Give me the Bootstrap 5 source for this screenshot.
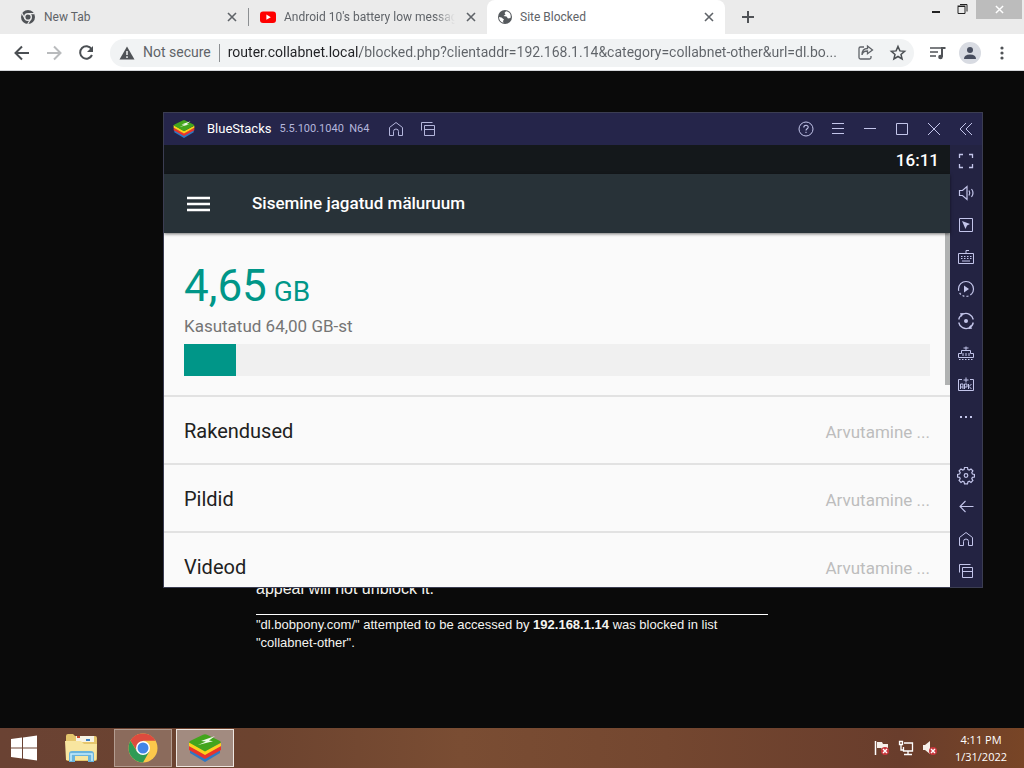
<!DOCTYPE html>
<html lang="en">
<head>
<meta charset="utf-8">
<meta name="viewport" content="width=device-width, initial-scale=1">
<title>Site Blocked</title>
<link href="https://cdn.jsdelivr.net/npm/bootstrap@5.3.0/dist/css/bootstrap.min.css" rel="stylesheet">
<style>
  body { font-family: "Open Sans", sans-serif; background: #0a0a0a; }
  button { border: 0; background: none; padding: 0; color: inherit; }
  svg { display: block; flex: none; }

  /* browser */
  .tab-strip { height: 34px; background: #ebebeb; color: #5f6368; font-family: Roboto, sans-serif; font-size: 12px; padding-right: 2px; }
  .browser-tab { flex: 0 1 238px; min-width: 0; height: 34px; padding: 0 8px 0 11px; }
  .browser-tab.first-tab { flex-basis: 248px; padding-left: 20px; }
  .browser-tab a { color: inherit; text-decoration: none; overflow: hidden; white-space: nowrap; }
  .tab-rule { width: 1px; height: 18px; background: #8c8f92; }
  .tab-current { background: #fff; border-radius: 8px 8px 0 0; }
  .fade-end { -webkit-mask-image: linear-gradient(90deg, #000 88%, transparent); mask-image: linear-gradient(90deg, #000 88%, transparent); }
  .caption-btn { width: 26px; height: 19px; color: #222; }
  .caption-close { width: 46px; background: #bcbcbc; color: #fff; }
  .tool-bar { height: 37px; background: #fff; color: #5f6368; border-bottom: 1px solid #d5d7da; padding: 1px 6px 0 6px; }
  .tool-btn { width: 32px; height: 32px; }
  .omnibox { height: 28px; border-radius: 14px; background: #f1f3f4; font-family: Roboto, sans-serif; font-size: 14px; padding-left: 9px; }
  .omnibox input { border: 0; outline: 0; background: none; padding: 0; min-width: 0; font-size: 14px;
    color: transparent; background: linear-gradient(90deg, #202124 132px, #5f6368 132px); -webkit-background-clip: text; background-clip: text; }
  .avatar { width: 22px; height: 22px; border-radius: 50%; background: #d8dbe2; color: #474d5e; }

  /* blocked page */
  .blocked-page { color: #f4f4f0; font-family: "Liberation Sans", Arial, sans-serif; min-height: 0; }
  .blocked-copy { width: 50%; margin: 0 auto; padding-top: 506px; font-size: 13px; line-height: 18px; }
  .blocked-copy .appeal { font-size: 16px; line-height: 24px; margin: 0; }
  .blocked-copy hr { margin: 13px 0 1px; border-top: 1px solid #fff; opacity: 1; }

  /* emulator window lying over the browser */
  .emulator { position: absolute; inset: 41px 41px 140px 163px; border: 1px solid #3b3d52; background: #232342; color: #c3c5ea; font-family: Roboto, sans-serif; }
  .emu-title { height: 32px; background: #25254a; padding-left: 9px; }
  .emu-name { font-size: 13px; color: #fff; }
  .emu-version { font-size: 11px; color: #b4b6dc; }
  .emu-quick { margin-left: 11px; }
  .emu-btn { width: 32px; height: 32px; flex: none; }
  .emu-screen { background: #fafafa; min-width: 0; }
  .status-row { height: 29px; background: #14181b; color: #fff; font-size: 17px; font-weight: 500; padding: 2px 11px 0 0; }
  .app-row { height: 59px; background: #283238; color: #fff; padding-left: 23px; box-shadow: 0 1px 3px #0008; z-index: 1; }
  .app-row h1 { font-size: 17px; margin: 0 0 0 42px; font-weight: 500; }
  .storage { position: relative; min-height: 0; overflow: hidden; }
  .storage-head { height: 162px; padding: 29px 20px 0; flex: none; }
  .used { color: #009688; font-size: 44px; line-height: 48px; }
  .used-unit { font-size: 28px; white-space: pre; }
  .used-note { color: #757575; font-size: 17px; line-height: 20px; }
  .storage .progress { height: 32px; border-radius: 0; background: #f0f0f0; margin-top: 8px; }
  .storage .progress-bar { background: #009688; }
  .storage-row { height: 68px; border-top: 2px solid #e2e2e2; padding: 19px 20px 0; font-size: 20px; color: #212121; flex: none; }
  .storage-row a { color: inherit; text-decoration: none; }
  .pending { font-size: 17px; color: #bdbdbd; }
  .scroll-thumb { position: absolute; right: 0; top: 0; width: 5px; height: 152px; background: #b0b2b2; }

  /* taskbar */
  .task-bar { height: 40px; background: linear-gradient(90deg, #6a4233, #6c432f 25%, #7a4d33 45%, #744730 65%, #693d2c 88%, #784526); color: #fff; }
  .task-btn { width: 58px; height: 38px; }
  .task-start { width: 48px; }
  .task-open { background: #8b6b5c; border: 1px solid #b39c90; }
  .task-front { background: #a28b80; border: 1px solid #eee6e0; }
  .clock { width: 78px; padding-right: 8px; font-size: 11px; line-height: 17px; }
</style>
</head>
<body class="vh-100 d-flex flex-column overflow-hidden">

<svg width="0" height="0" class="position-absolute" aria-hidden="true">
  <symbol id="close" viewBox="0 0 10 10"><path d="M1 1l8 8M9 1L1 9" stroke="currentColor" stroke-width="1.6" fill="none"/></symbol>
  <symbol id="home" viewBox="0 0 16 16"><path d="M1.500 6.500L8 1.500l6.500 5v8h-4v-4a2.500 2.500 0 0 0-5 0v4h-4z" fill="none" stroke="currentColor"/></symbol>
  <symbol id="windows" viewBox="0 0 16 16"><path d="M1.500 9.500v-8h11M4.500 4.500h10v10h-10zM4.500 8.500h10" fill="none" stroke="currentColor"/></symbol>
  <symbol id="stack" viewBox="0 0 34 30">
    <path d="M2 20l15 9 15-9v-4L17 24 2 16z" fill="#2d78c4"/><path d="M1 17l16 9 16-9v-4L17 21 1 13z" fill="#e8342c"/>
    <path d="M1 13l16 9 16-9v-3L17 18 1 9z" fill="#fcd21c"/><path d="M1 9.500Q1 8.500 3 7.500L15 1.700q2-1 4 0l12 5.800q2 1 2 2L17 18.500z" fill="#43a51d"/>
    <path d="M10 12l8-3.500-5-.5 14-5-6 4.500 4 .7z" fill="#effbe9"/>
  </symbol>
</svg>

<header>
  <div class="tab-strip d-flex align-items-center">
    <div class="browser-tab first-tab d-flex align-items-center gap-2">
      <svg width="16" height="16" viewBox="0 0 16 16"><circle cx="8" cy="8" r="7" fill="#505357"/><circle cx="8" cy="8" r="3.300" fill="none" stroke="#ebebeb" stroke-width="1.400"/><path d="M8 4.700h6.400M5.100 9.700L1.900 4.200M10.900 9.700L7.700 15" stroke="#ebebeb" stroke-width="1.200"/></svg>
      <a href="#" class="flex-grow-1">New Tab</a>
      <button aria-label="Close New Tab"><svg width="16" height="10"><use href="#close" width="10" height="10" x="3"/></svg></button>
    </div>
    <span class="tab-rule"></span>
    <div class="browser-tab d-flex align-items-center gap-2">
      <svg width="16" height="16" viewBox="0 0 16 16"><rect y="2.500" width="16" height="11.500" rx="3" fill="#f00"/><path d="M6.400 5.600l4.400 2.600-4.400 2.600z" fill="#fff"/></svg>
      <a href="#" class="flex-grow-1 fade-end">Android 10's battery low messag</a>
      <button aria-label="Close Android 10's battery low message"><svg width="16" height="10"><use href="#close" width="10" height="10" x="3"/></svg></button>
    </div>
    <div class="browser-tab tab-current d-flex align-items-center gap-2">
      <svg width="14" height="14" viewBox="0 0 14 14"><circle cx="7" cy="7" r="7" fill="#55595d"/><path d="M1 7l2.500.5L6 9.500 5 11l.5 1.800C2.500 12 1 10 1 7zM8 1.200L6.500 3l1 1.500L5.500 6l3 .5L10 8.500l2.500-.5C13.500 4 11 1.500 8 1.200z" fill="#fff"/></svg>
      <a href="#" class="flex-grow-1">Site Blocked</a>
      <button aria-label="Close Site Blocked"><svg width="16" height="10"><use href="#close" width="10" height="10" x="3"/></svg></button>
    </div>
    <button class="ms-3" aria-label="New tab"><svg width="14" height="14"><path d="M7 1v12M1 7h12" stroke="#505357" stroke-width="2"/></svg></button>
    <div class="ms-auto d-flex align-self-start">
      <button class="caption-btn" aria-label="Minimize"><svg width="26" height="19"><path d="M8 12h8" stroke="currentColor" stroke-width="2"/></svg></button>
      <button class="caption-btn" aria-label="Restore"><svg width="26" height="19"><path d="M8 6.500h7v7H8zM7.500 6h8" fill="none" stroke="currentColor"/><path d="M10 4.500h7v7" fill="none" stroke="currentColor"/></svg></button>
      <button class="caption-btn caption-close d-flex align-items-center justify-content-center" aria-label="Close"><svg width="9" height="9"><use href="#close"/></svg></button>
    </div>
  </div>
  <div class="tool-bar d-flex align-items-center">
    <button class="tool-btn" aria-label="Back"><svg width="32" height="32"><path d="M23 16H10M16 9.500L9.500 16l6.500 6.500" fill="none" stroke="#4b4f53" stroke-width="2"/></svg></button>
    <button class="tool-btn" aria-label="Forward"><svg width="32" height="32"><path d="M9 16h13M16 9.500l6.500 6.500-6.500 6.500" fill="none" stroke="#b9bbbd" stroke-width="2"/></svg></button>
    <button class="tool-btn" aria-label="Reload"><svg width="32" height="32"><path d="M21.500 12A6.200 6.200 0 1 0 22 18" fill="none" stroke="#4b4f53" stroke-width="2"/><path d="M23 9v6h-6z" fill="#4b4f53"/></svg></button>
    <div class="omnibox d-flex align-items-center flex-grow-1 ms-2 me-2">
      <svg width="16" height="14" viewBox="0 0 16 14"><path d="M8 0.500L15.500 13.500H.5z" fill="#505357"/><path d="M8 5v4M8 10.300v1.700" stroke="#f1f3f4" stroke-width="1.500"/></svg>
      <label for="address" class="ms-2 text-nowrap">Not secure</label>
      <span class="tab-rule mx-2"></span>
      <input id="address" class="flex-grow-1" type="text" value="router.collabnet.local/blocked.php?clientaddr=192.168.1.14&amp;category=collabnet-other&amp;url=dl.bo...">
      <button class="tool-btn" aria-label="Share"><svg width="32" height="32"><path d="M14 10h-3.500a1.500 1.500 0 0 0-1.500 1.500v9a1.500 1.500 0 0 0 1.500 1.500h9a1.500 1.500 0 0 0 1.500-1.500V19M12 18c.5-3 2.500-4 5.500-4v2.800L22.500 13l-5-4v2.500C13.500 11.500 12 14 12 18z" fill="none" stroke="#5f6368" stroke-width="1.300"/></svg></button>
      <button class="tool-btn" aria-label="Bookmark"><svg width="32" height="32"><path d="M16 9.500l1.900 4.400 4.700.4-3.600 3.100 1.100 4.600-4.100-2.500-4.100 2.500 1.100-4.600-3.600-3.100 4.700-.4z" fill="none" stroke="#4b4f53" stroke-width="1.500"/></svg></button>
    </div>
    <button class="tool-btn" aria-label="Media controls"><svg width="32" height="32"><path d="M8 11h11M8 15h8M8 19h6" stroke="#505357" stroke-width="1.700"/><path d="M20 20v-9h3.500" stroke="#505357" stroke-width="2" fill="none"/><circle cx="18.500" cy="20" r="2.300" fill="#505357"/></svg></button>
    <button class="tool-btn d-flex align-items-center justify-content-center" aria-label="Profile"><span class="avatar"><svg width="22" height="22"><circle cx="11" cy="8" r="3" fill="currentColor"/><path d="M5 17c0-3 2-4.500 6-4.500s6 1.500 6 4.500z" fill="currentColor"/></svg></span></button>
    <button class="tool-btn" aria-label="Menu"><svg width="32" height="32" fill="#505357"><circle cx="16" cy="11" r="1.600"/><circle cx="16" cy="16" r="1.600"/><circle cx="16" cy="21" r="1.600"/></svg></button>
  </div>
</header>

<main class="blocked-page flex-grow-1 position-relative overflow-hidden">
  <div class="blocked-copy">
    <p class="appeal">appeal will not unblock it.</p>
    <hr>
    <p class="mb-0">"dl.bobpony.com/" attempted to be accessed by <b>192.168.1.14</b> was blocked in list "collabnet-other".</p>
  </div>

  <section class="emulator d-flex flex-column" aria-label="BlueStacks">
    <div class="emu-title d-flex align-items-center">
      <svg width="22" height="20"><use href="#stack"/></svg>
      <span class="emu-name ms-2 ps-1">BlueStacks</span>
      <span class="emu-version ms-2 me-auto d-flex align-items-center">5.5.100.1040&nbsp; N64
        <button class="emu-btn emu-quick d-flex align-items-center justify-content-center" aria-label="Home"><svg width="16" height="16"><use href="#home"/></svg></button>
        <button class="emu-btn d-flex align-items-center justify-content-center" aria-label="Recent apps"><svg width="16" height="16"><use href="#windows"/></svg></button>
      </span>
      <button class="emu-btn" aria-label="Help"><svg width="32" height="32"><circle cx="16" cy="16" r="7" fill="none" stroke="currentColor"/><path d="M13.800 14.500c0-3 4.600-2.800 4.400-.2-.1 1.500-2.200 1.500-2.200 3.200M16 18.800v1.200" fill="none" stroke="currentColor" stroke-width="1.100"/></svg></button>
      <button class="emu-btn" aria-label="Menu"><svg width="32" height="32"><path d="M10 10.500h12M10 15.500h12M10 20.500h12" stroke="currentColor"/></svg></button>
      <button class="emu-btn" aria-label="Minimize"><svg width="32" height="32"><path d="M10 15.500h12" stroke="currentColor"/></svg></button>
      <button class="emu-btn" aria-label="Maximize"><svg width="32" height="32"><path d="M10.500 10.500h11v11h-11z" fill="none" stroke="currentColor"/></svg></button>
      <button class="emu-btn" aria-label="Close"><svg width="32" height="32"><path d="M10 10l12 12M22 10L10 22" stroke="currentColor"/></svg></button>
      <button class="emu-btn" aria-label="Collapse"><svg width="32" height="32"><path d="M16 10l-6 6 6 6M22 10l-6 6 6 6" fill="none" stroke="currentColor"/></svg></button>
    </div>

    <div class="d-flex flex-grow-1 overflow-hidden">
      <div class="emu-screen flex-grow-1 d-flex flex-column">
        <div class="status-row d-flex align-items-center justify-content-end flex-shrink-0">16:11</div>
        <div class="app-row d-flex align-items-center flex-shrink-0">
          <button aria-label="Open navigation"><svg width="23" height="16"><path d="M0 2h23M0 8h23M0 14h23" stroke="#fff" stroke-width="2.500"/></svg></button>
          <h1>Sisemine jagatud mäluruum</h1>
        </div>
        <div class="storage flex-grow-1 d-flex flex-column">
          <div class="storage-head">
            <div class="used">4,65<span class="used-unit"> GB</span></div>
            <div class="used-note">Kasutatud 64,00 GB-st</div>
            <div class="progress" role="progressbar" aria-label="Used storage" aria-valuenow="7" aria-valuemin="0" aria-valuemax="100"><div class="progress-bar" style="width: 7%"></div></div>
          </div>
          <div class="storage-row d-flex align-items-baseline justify-content-between"><a href="#">Rakendused</a><span class="pending">Arvutamine ...</span></div>
          <div class="storage-row d-flex align-items-baseline justify-content-between"><a href="#">Pildid</a><span class="pending">Arvutamine ...</span></div>
          <div class="storage-row d-flex align-items-baseline justify-content-between"><a href="#">Videod</a><span class="pending">Arvutamine ...</span></div>
          <span class="scroll-thumb"></span>
        </div>
      </div>

      <nav class="d-flex flex-column flex-shrink-0" aria-label="Emulator tools">
        <button class="emu-btn" aria-label="Full screen"><svg width="32" height="32"><path d="M9.500 13V9.500H13M19 9.500h3.500V13M22.500 19v3.500H19M13 22.500H9.500V19" fill="none" stroke="currentColor" stroke-width="1.300"/></svg></button>
        <button class="emu-btn" aria-label="Volume"><svg width="32" height="32"><path d="M9.500 13.500h3l4.500-4v13l-4.500-4h-3zM19 13.500q1.500 2.500 0 5M21.500 12q3 4 0 8" fill="none" stroke="currentColor" stroke-width="1.200"/></svg></button>
        <button class="emu-btn" aria-label="Lock cursor"><svg width="32" height="32"><path d="M9.500 9.500h13v13h-13z" fill="none" stroke="currentColor"/><path d="M12 12l8 3-3 1.500L15.500 20z" fill="currentColor"/></svg></button>
        <button class="emu-btn" aria-label="Game controls"><svg width="32" height="32"><path d="M8.500 12.500h15v10h-15zM16 12v-2.500h3" fill="none" stroke="currentColor"/><path d="M11 15.500h10.500M11 17.500h10.500" stroke="currentColor" stroke-dasharray="1.500 1.500"/><path d="M12 20h8" stroke="currentColor"/></svg></button>
        <button class="emu-btn" aria-label="Macro recorder"><svg width="32" height="32"><path d="M8.500 16a7.500 7.500 0 0 1 15 0q0 3-2 5" fill="none" stroke="currentColor" stroke-width="1.200"/><path d="M8.500 16a7.500 7.500 0 0 0 13 5" fill="none" stroke="currentColor" stroke-width="1.200" stroke-dasharray="2 2"/><path d="M14 12.500l5 3.500-5 3.500z" fill="currentColor"/></svg></button>
        <button class="emu-btn" aria-label="Sync"><svg width="32" height="32"><path d="M13 9.100a7.500 7.500 0 0 1 10.300 5.400M23.300 17.500a7.500 7.500 0 0 1-4.300 5.300M19 22.900a7.500 7.500 0 0 1-10.300-5.400M8.700 14.500a7.500 7.500 0 0 1 2.600-4.300" fill="none" stroke="currentColor" stroke-width="1.300"/><path d="M10 8.300l4-.3-2.500 4zM22 23.700l-4 .3 2.500-4z" fill="currentColor"/><circle cx="16" cy="16" r="2" fill="currentColor"/></svg></button>
        <button class="emu-btn" aria-label="Multi-instance"><svg width="32" height="32"><path d="M8.500 20.500v-4h3v-3h9v3h3v4zM16 13.500v-4M13.500 11h5M13 16v3M16 16v3M19 16v3" fill="none" stroke="currentColor"/><path d="M9 22.500h15" stroke="currentColor" stroke-dasharray="1.500 1.500"/></svg></button>
        <button class="emu-btn" aria-label="Install APK"><svg width="32" height="32"><path d="M12 10.500H8.500v11h15v-11H20M16 8.500v5M13.500 11h5" fill="none" stroke="currentColor"/><path d="M10.500 20v-5h2.500v5M10.500 18H13M14.500 20v-5H17v3h-2.500M18.500 15v5M21.500 15l-2.500 2.500 2.500 2.500" fill="none" stroke="currentColor"/></svg></button>
        <button class="emu-btn" aria-label="More"><svg width="32" height="32"><path d="M10 16h2M15 16h2M20 16h2" stroke="currentColor" stroke-width="2"/></svg></button>
        <button class="emu-btn mt-auto" aria-label="Settings"><svg width="32" height="32" viewBox="0 1 32 32" fill="none" stroke="currentColor" stroke-width="1.200"><path d="M14.500 9.500h3l.4 2 1.400.6 1.700-1.100 1.900 1.900-1.100 1.700.6 1.400 2 .4v2.600l-2 .4-.6 1.400 1.100 1.700-1.900 1.900-1.700-1.100-1.400.6-.4 2h-3l-.4-2-1.400-.6-1.700 1.100-1.900-1.900 1.100-1.700-.6-1.400-2-.4v-2.600l2-.4.6-1.400-1.100-1.700L11 11l1.700 1.100 1.400-.6z"/><circle cx="16" cy="17.500" r="1.800"/></svg></button>
        <button class="emu-btn" aria-label="Back"><svg width="32" height="32"><path d="M23.500 15.500H10M15.500 10L10 15.500l5.500 5.500" fill="none" stroke="currentColor" stroke-width="1.100"/></svg></button>
        <button class="emu-btn d-flex align-items-center justify-content-center" aria-label="Home screen"><svg width="16" height="16"><use href="#home"/></svg></button>
        <button class="emu-btn d-flex align-items-center justify-content-center" aria-label="Recents"><svg width="16" height="16"><use href="#windows"/></svg></button>
      </nav>
    </div>
  </section>
</main>

<footer class="task-bar d-flex align-items-center flex-shrink-0">
  <button class="task-btn task-start me-1 d-flex align-items-center justify-content-center" aria-label="Start"><svg width="26" height="26" viewBox="0 0 26 26"><path d="M0 4l11-1.500v10H0zM12 2.400L26 .4v12.100H12zM0 13.500h11v10L0 22zM12 13.500h14v12.100l-14-2z" fill="#fff"/></svg></button>
  <button class="task-btn d-flex align-items-center justify-content-center" aria-label="File Explorer"><svg width="34" height="30" viewBox="0 0 34 30">
    <path d="M2 3q0-2 2-2h5l2 2h20q2 0 2 2v21q0 2-2 2H4q-2 0-2-2z" fill="#e5c66c"/><path d="M12 3h18v6H12z" fill="#f7f3e4"/><path d="M13 3h3v2h-3z" fill="#c84b32"/><path d="M22 6h4v2h-4z" fill="#3d83c5"/><path d="M1 8h16l3 3h13l-1 16H2z" fill="#f8e6a0"/><path d="M5 29v-8q0-3 3-3h19q3 0 3 3v8h-6v-6H11v6z" fill="#6bb4dc"/><path d="M7 28v-7h21v7" fill="none" stroke="#c6ecfb" stroke-width="1.500"/></svg></button>
  <button class="task-btn task-open ms-1 d-flex align-items-center justify-content-center" aria-label="Chrome"><svg width="30" height="30" viewBox="0 0 30 30"><circle cx="15" cy="15" r="14.500" fill="#fbc84b"/><path d="M2.400 7.800A14.500 14.500 0 0 1 27.600 7.800H15L9 18z" fill="#dd4b3e"/><path d="M2.400 7.800A14.500 14.500 0 0 0 15 29.500L21 19 9 18.500z" fill="#2e9b55"/><circle cx="15" cy="15" r="7" fill="#fff"/><circle cx="15" cy="15" r="5.500" fill="#4285e8"/></svg></button>
  <button class="task-btn task-front ms-1 d-flex align-items-center justify-content-center" aria-label="BlueStacks"><svg width="34" height="30"><use href="#stack"/></svg></button>
  <div class="ms-auto d-flex align-items-center gap-2">
    <button aria-label="Action Center"><svg width="16" height="16"><path d="M1.500 1v14" stroke="#fff" stroke-width="1.500"/><path d="M3 2h5l1 2h5v5H8L7 8H3z" fill="#f5efe9"/><circle cx="11" cy="11" r="4" fill="#c8373c"/><path d="M9 9l4 4M13 9l-4 4" stroke="#fff" stroke-width="1.400"/></svg></button>
    <button aria-label="Network"><svg width="16" height="16" fill="none" stroke="#fff" stroke-width="1.300"><path d="M6 3h8.500v8H5.500V7M10 11v3M6 14.500h8M1.500 1.500h3v3h-3zM3 4.500v5.500h2.500"/></svg></button>
    <button aria-label="Volume"><svg width="16" height="16"><path d="M1 5h2l5-4v13l-5-4H1z" fill="#f5efe9"/><circle cx="11" cy="11" r="4" fill="#c8373c"/><path d="M9 9l4 4M13 9l-4 4" stroke="#fff" stroke-width="1.400"/></svg></button>
    <div class="clock text-center">4:11 PM<br>1/31/2022</div>
  </div>
</footer>

<script src="https://cdn.jsdelivr.net/npm/bootstrap@5.3.0/dist/js/bootstrap.bundle.min.js"></script>
</body>
</html>
